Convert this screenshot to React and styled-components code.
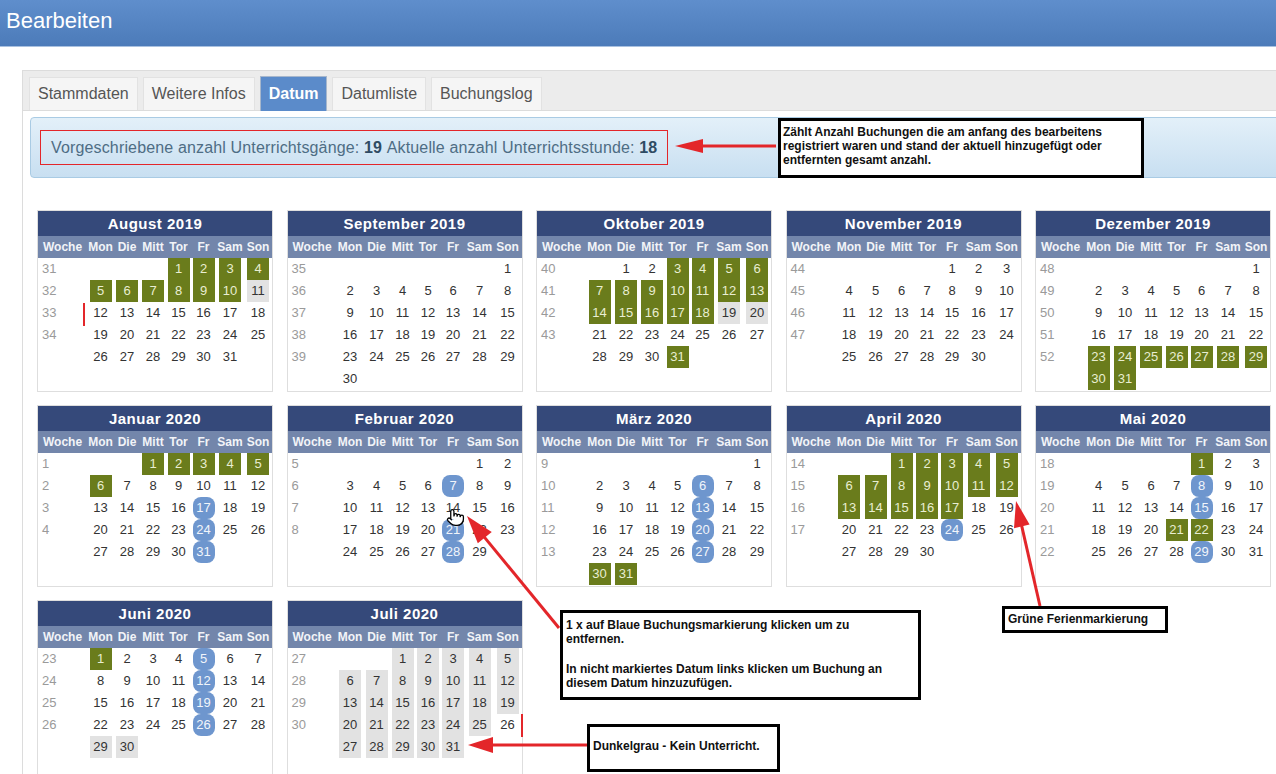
import React from 'react';
import styled, { createGlobalStyle } from 'styled-components';
import { Pointer } from 'lucide-react';

const GlobalStyle = createGlobalStyle`
  html, body {
    margin: 0;
    padding: 0;
    background: #fff;
    overflow: hidden;
  }
  body {
    font-family: 'Liberation Sans', Arial, sans-serif;
  }
`;

const RED = '#e3262a';

const Page = styled.div`
  position: relative;
  width: 1276px;
  height: 774px;
  overflow: hidden;
`;

const Header = styled.header`
  height: 47px;
  box-sizing: border-box;
  padding: 8px 0 0 6px;
  background: linear-gradient(#5f8ecc, #4c7bb9);
  border-bottom: 1px solid #a9c1e0;
  color: #fff;
  font-size: 22px;
  line-height: 25px;
`;

const Main = styled.main`
  padding: 23px 0 0 22px;
`;

const Panel = styled.section`
  width: 1290px;
  height: 720px;
  border: 1px solid #dcdcdc;
  background: #fff;
`;

const TabBar = styled.nav`
  display: flex;
  align-items: flex-end;
  gap: 5px;
  height: 40px;
  box-sizing: border-box;
  padding-left: 6px;
  background: #ececec;
  border-bottom: 1px solid #dcdcdc;
`;

const Tab = styled.div`
  height: ${p => (p.$active ? 35 : 33)}px;
  margin-bottom: ${p => (p.$active ? -1 : 0)}px;
  box-sizing: border-box;
  display: flex;
  align-items: center;
  padding: 0 8px;
  font-size: 16px;
  font-weight: ${p => (p.$active ? 700 : 400)};
  color: ${p => (p.$active ? '#fff' : '#555')};
  background: ${p => (p.$active ? '#5b8bca' : '#f5f5f5')};
  border: 1px solid ${p => (p.$active ? '#a7b7cc' : '#e2e2e2')};
  border-bottom: none;
`;

const Content = styled.div`
  padding: 6px 0 0 7px;
`;

const InfoBox = styled.div`
  height: 61px;
  box-sizing: border-box;
  padding: 12px 0 0 9px;
  border: 1px solid #a9cbe4;
  border-radius: 4px;
  background: linear-gradient(#e3f0f9, #c8dff1);
`;

const Counter = styled.div`
  display: inline-flex;
  align-items: center;
  height: 35px;
  box-sizing: border-box;
  padding: 0 10px;
  border: 1px solid ${RED};
  font-size: 16px;
  letter-spacing: 0.15px;
  color: #4e6d84;

  b {
    color: #2f4b63;
  }
`;

const CalendarGrid = styled.div`
  display: grid;
  grid-template-columns: repeat(5, 236px);
  column-gap: 13.5px;
  row-gap: 13px;
  margin: 32px 0 0 7px;
`;

const Calendar = styled.div`
  width: 236px;
  height: 182px;
  box-sizing: border-box;
  border: 1px solid #dedede;
  background: #fff;
`;

const Title = styled.div`
  height: 25px;
  line-height: 26px;
  background: #35497a;
  color: #fff;
  font-size: 15px;
  font-weight: 700;
  letter-spacing: 0.5px;
  text-align: center;
`;

const DayGrid = styled.div`
  display: grid;
  grid-template-columns: 49px 27px 26px 26px 25px 25px 28px 28px;
  grid-auto-rows: 22px;
`;

const HeadCell = styled.div`
  background: #7386ab;
  color: #f2f4f8;
  font-size: 12px;
  font-weight: 700;
  line-height: 22px;
  text-align: center;
  white-space: nowrap;
`;

const WeekCell = styled.div`
  padding-left: 4px;
  color: #9a9a9a;
  font-size: 13px;
  line-height: 22px;
`;

const dayBg = { g: '#6a7c1c', b: '#6e96ce', x: '#e2e2e2' };
const dayFg = { g: '#e9eed2', b: '#f1f5fb', x: '#333' };

const Day = styled.div`
  justify-self: center;
  width: 22px;
  height: 22px;
  line-height: 22px;
  text-align: center;
  font-size: 13px;
  color: ${p => (p.$mark ? dayFg[p.$mark] : '#333')};
  background: ${p => (p.$mark ? dayBg[p.$mark] : 'transparent')};
  border-radius: ${p => (p.$mark === 'b' ? 8 : 0)}px;
`;

const Note = styled.div`
  position: absolute;
  left: ${p => p.$x}px;
  top: ${p => p.$y}px;
  width: ${p => p.$w}px;
  height: ${p => p.$h}px;
  box-sizing: border-box;
  padding: ${p => p.$pad};
  border: 3px solid #000;
  background: #fff;
  color: #111;
  font-size: 12px;
  font-weight: 700;
  line-height: 14px;

  p {
    margin: 0;
  }
  p + p {
    margin-top: 16px;
  }
`;

const Overlay = styled.svg`
  position: absolute;
  left: 0;
  top: 0;
  pointer-events: none;
`;

const Cursor = styled.div`
  position: absolute;
  left: 446px;
  top: 508px;
  line-height: 0;
`;

const HEAD = ['Woche', 'Mon', 'Die', 'Mitt', 'Tor', 'Fr', 'Sam', 'Son'];

const range = (a, b) => Array.from({ length: b - a + 1 }, (_, i) => a + i);
const marks = (g = [], b = [], x = []) => {
  const m = {};
  g.forEach(d => (m[d] = 'g'));
  b.forEach(d => (m[d] = 'b'));
  x.forEach(d => (m[d] = 'x'));
  return m;
};

const months = [
  { name: 'August 2019', start: 3, len: 31, weeks: [31, 32, 33, 34], marks: marks(range(1, 10), [], [11]) },
  { name: 'September 2019', start: 6, len: 30, weeks: [35, 36, 37, 38, 39], marks: {} },
  { name: 'Oktober 2019', start: 1, len: 31, weeks: [40, 41, 42, 43], marks: marks([...range(3, 18), 31], [], [19, 20]) },
  { name: 'November 2019', start: 4, len: 30, weeks: [44, 45, 46, 47], marks: {} },
  { name: 'Dezember 2019', start: 6, len: 31, weeks: [48, 49, 50, 51, 52], marks: marks(range(23, 31)) },
  { name: 'Januar 2020', start: 2, len: 31, weeks: [1, 2, 3, 4], marks: marks(range(1, 6), [17, 24, 31]) },
  { name: 'Februar 2020', start: 5, len: 29, weeks: [5, 6, 7, 8], marks: marks([], [7, 21, 28]) },
  { name: 'März 2020', start: 6, len: 31, weeks: [9, 10, 11, 12, 13], marks: marks([30, 31], [6, 13, 20, 27]) },
  { name: 'April 2020', start: 2, len: 30, weeks: [14, 15, 16, 17], marks: marks(range(1, 17), [24]) },
  { name: 'Mai 2020', start: 4, len: 31, weeks: [18, 19, 20, 21, 22], marks: marks([1, 21, 22], [8, 15, 29]) },
  { name: 'Juni 2020', start: 0, len: 30, weeks: [23, 24, 25, 26], marks: marks([1], [5, 12, 19, 26], [29, 30]) },
  { name: 'Juli 2020', start: 2, len: 31, weeks: [27, 28, 29, 30], marks: marks([], [], [...range(1, 25), ...range(27, 31)]) },
];

const buildRows = (start, len) => {
  const cells = [...Array(start).fill(null), ...range(1, len)];
  while (cells.length < 42) cells.push(null);
  return range(0, 5).map(r => cells.slice(r * 7, r * 7 + 7));
};

const MonthCalendar = ({ month }) => {
  const rows = buildRows(month.start, month.len);
  return (
    <Calendar>
      <Title>{month.name}</Title>
      <DayGrid>
        {HEAD.map(h => (
          <HeadCell key={h}>{h}</HeadCell>
        ))}
        {rows.map((row, ri) => (
          <React.Fragment key={ri}>
            <WeekCell>{month.weeks[ri] ?? ''}</WeekCell>
            {row.map((d, di) =>
              d ? (
                <Day key={di} $mark={month.marks[d]}>
                  {d}
                </Day>
              ) : (
                <Day key={di} />
              )
            )}
          </React.Fragment>
        ))}
      </DayGrid>
    </Calendar>
  );
};

const Arrow = ({ from, to, len = 24, half = 8, width = 3 }) => {
  const [x1, y1] = from;
  const [x2, y2] = to;
  const dx = x2 - x1;
  const dy = y2 - y1;
  const d = Math.hypot(dx, dy);
  const ux = dx / d;
  const uy = dy / d;
  const bx = x2 - ux * len;
  const by = y2 - uy * len;
  const px = -uy * half;
  const py = ux * half;
  return (
    <g>
      <line x1={x1} y1={y1} x2={bx + ux * 2} y2={by + uy * 2} stroke={RED} strokeWidth={width} />
      <polygon points={`${x2},${y2} ${bx + px},${by + py} ${bx - px},${by - py}`} fill={RED} />
    </g>
  );
};

export default function App() {
  return (
    <Page>
      <GlobalStyle />
      <Header>Bearbeiten</Header>
      <Main>
        <Panel>
          <TabBar>
            <Tab>Stammdaten</Tab>
            <Tab>Weitere Infos</Tab>
            <Tab $active>Datum</Tab>
            <Tab>Datumliste</Tab>
            <Tab>Buchungslog</Tab>
          </TabBar>
          <Content>
            <InfoBox>
              <Counter>
                Vorgeschriebene anzahl Unterrichtsgänge:&nbsp;<b>19</b>&nbsp;Aktuelle anzahl Unterrichtsstunde:&nbsp;<b>18</b>
              </Counter>
            </InfoBox>
            <CalendarGrid>
              {months.map(m => (
                <MonthCalendar key={m.name} month={m} />
              ))}
            </CalendarGrid>
          </Content>
        </Panel>
      </Main>

      <Overlay width="1276" height="774" viewBox="0 0 1276 774">
        <Arrow from={[776, 146]} to={[675, 146]} len={28} half={7} />
        <Arrow from={[559, 628]} to={[467, 516]} len={28} half={9} />
        <Arrow from={[1040, 606]} to={[1016, 501]} len={26} half={8} />
        <Arrow from={[588, 745]} to={[468, 745]} len={25} half={8} />
        <line x1="84" y1="303" x2="84" y2="326" stroke={RED} strokeWidth="2" />
        <line x1="522" y1="714" x2="522" y2="737" stroke={RED} strokeWidth="2" />
      </Overlay>

      <Cursor>
        <Pointer size={19} color="#000" fill="#fff" strokeWidth={1.6} />
      </Cursor>

      <Note $x={778} $y={118} $w={366} $h={60} $pad="4px 2px">
        Zählt Anzahl Buchungen die am anfang des bearbeitens
        <br />
        registriert waren und stand der aktuell hinzugefügt oder
        <br />
        entfernten gesamt anzahl.
      </Note>
      <Note $x={560} $y={610} $w={361} $h={90} $pad="5px 3px">
        <p>
          1 x auf Blaue Buchungsmarkierung klicken um zu
          <br />
          entfernen.
        </p>
        <p>
          In nicht markiertes Datum links klicken um Buchung an
          <br />
          diesem Datum hinzuzufügen.
        </p>
      </Note>
      <Note $x={1002} $y={606} $w={166} $h={27} $pad="3px 3px">
        Grüne Ferienmarkierung
      </Note>
      <Note $x={587} $y={724} $w={193} $h={48} $pad="12px 3px">
        Dunkelgrau - Kein Unterricht.
      </Note>
    </Page>
  );
}
